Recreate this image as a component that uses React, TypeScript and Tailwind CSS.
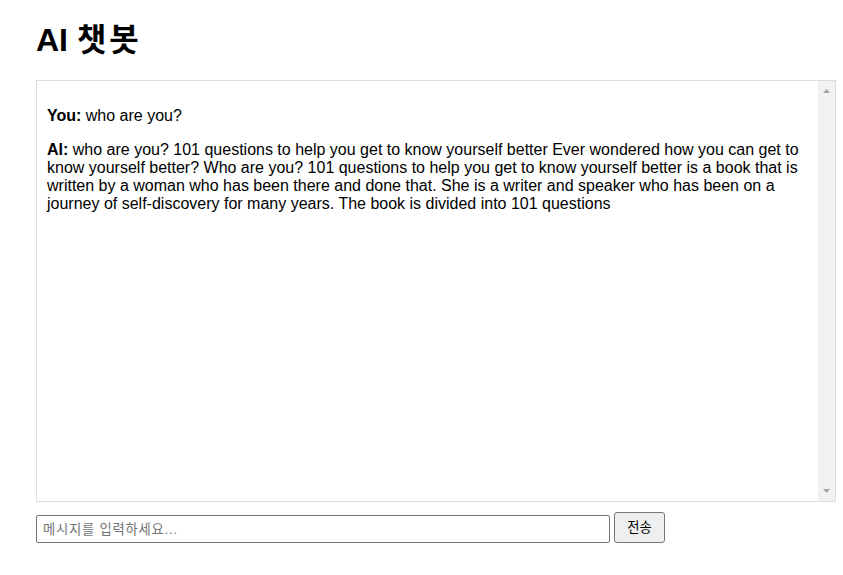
const messages = [
  { who: "You", text: "who are you?" },
  {
    who: "AI",
    text: "who are you? 101 questions to help you get to know yourself better Ever wondered how you can get to know yourself better? Who are you? 101 questions to help you get to know yourself better is a book that is written by a woman who has been there and done that. She is a writer and speaker who has been on a journey of self-discovery for many years. The book is divided into 101 questions",
  },
];

// classic scrollbar, drawn (the headless browser uses overlay bars)
const ScrollBar = () => (
  <div className="flex w-[17px] shrink-0 flex-col justify-between bg-[#f1f1f1] py-[7px]">
    <svg width="17" height="5" viewBox="0 0 17 5" className="block">
      <polygon points="5,5 12,5 8.5,1" fill="#a3a3a3" />
    </svg>
    <svg width="17" height="5" viewBox="0 0 17 5" className="block">
      <polygon points="5,0 12,0 8.5,4" fill="#a3a3a3" />
    </svg>
  </div>
);

const App = () => {
  return (
    <div className="min-h-screen w-full bg-white px-[36px] font-['Liberation_Sans','Noto_Sans_CJK_KR',sans-serif] text-black">
      <h1 className="pt-[22px] text-[32px] font-bold leading-[37px]">
        AI <span className="tracking-[3px]">챗봇</span>
      </h1>

      <div className="mt-[21px] flex h-[422px] w-[800px] border border-[#dddddd]">
        <div className="flex-1 overflow-hidden p-[10px] text-[16px] leading-[18px]">
          {messages.map((m, i) => (
            <p key={i} className="my-[16px]">
              <strong>{m.who}:</strong> {m.text}
            </p>
          ))}
        </div>
        <ScrollBar />
      </div>

      <div className="mt-[10px] flex items-end gap-[4px]">
        <input
          type="text"
          placeholder="메시지를 입력하세요..."
          className="h-[28px] w-[574px] rounded-[2px] border border-[#767676] px-[6px] text-[13.33px] outline-none placeholder:tracking-[0.75px] placeholder:text-[#757575]"
        />
        <button className="h-[31px] w-[51px] rounded-[3px] border border-[#767676] bg-[#efefef] text-[13.33px]">
          전송
        </button>
      </div>
    </div>
  );
};

export default App;
